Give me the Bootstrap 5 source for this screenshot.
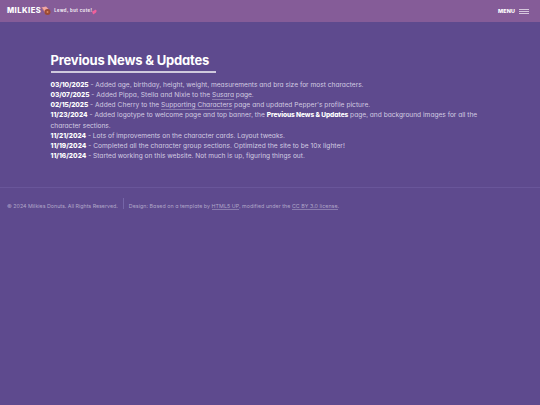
<!DOCTYPE html>
<html lang="en">
<head>
<meta charset="utf-8">
<meta name="viewport" content="width=device-width, initial-scale=1">
<title>Milkies Donuts</title>
<link href="https://cdn.jsdelivr.net/npm/bootstrap@5.3.0/dist/css/bootstrap.min.css" rel="stylesheet">
<style>
body{background:#5e4a8e;color:#d3cce2;font-family:Inter,"Liberation Sans",sans-serif;font-feature-settings:"cv11","ss03";font-size:6.6px;font-weight:400;line-height:10.13px}
.topbar{height:22px;background:#855c98;padding:0 11px 0 7px;color:#fff}
.brand{font-size:7.6px;font-weight:800;letter-spacing:.45px;padding-top:1px}
.donut{width:10px;height:10px}
.tagline{font-size:4.2px;font-weight:700;letter-spacing:.45px;margin-left:3px;padding-top:1px;color:#f3ecf5}
.heart{width:5px;height:6px;margin-top:1px}
.menu-label{font-size:5.4px;font-weight:800;letter-spacing:.15px}
.bars{width:10px;gap:1px}
.bars i{display:block;height:1px;background:#d6c7dd}
.news{padding:30px 50px 0 50.5px;height:165px}
.news h1{font-size:13px;font-weight:700;color:#fff;line-height:17px;width:165.5px;height:21px;border-bottom:2px solid #cfc9dd;margin-bottom:7px;letter-spacing:-.2px}
.news p{height:10.13px}
.news b{color:#fff;font-weight:800;letter-spacing:-.09px}
.news .date-plain{letter-spacing:0}
.track-1{letter-spacing:.01px}
.track-2{letter-spacing:.04px}
a{color:inherit;text-decoration:none;border-bottom:1px solid #8a7cae}
footer{border-top:1px solid #69569a;font-size:5.32px;color:#b0a6c8;padding:10px 7px}
.divide{border-left:1px solid #7565a8;height:11px;margin:0 5px}
.foot-text{padding-top:6px}
.credits{letter-spacing:.04px}
</style>
</head>
<body>
<header class="topbar d-flex align-items-center justify-content-between">
<div class="d-flex align-items-center"><span class="brand">MILKIES</span><svg class="donut" viewBox="0 0 20 20"><path d="M1 3l9-2 5 5-6 9z" fill="#f2a6a3"/><path d="M2 4l5 7" stroke="#b0605c" stroke-width="1.2"/><ellipse cx="13" cy="12" rx="6" ry="6" fill="#9b4a35"/><circle cx="13" cy="12" r="2" fill="#d98a61"/></svg><span class="tagline">Lewd, but cute!</span><svg class="heart" viewBox="0 0 10 12"><path d="M2 10C-1 5 1 2 4 4 5 0 10 1 9 5 8 8 5 9 2 11z" fill="#f0609b"/></svg></div>
<div class="d-flex align-items-center gap-1"><span class="menu-label">MENU</span><span class="bars d-flex flex-column"><i></i><i></i><i></i></span></div>
</header>
<main class="news">
<h1 class="text-nowrap">Previous News &amp; Updates</h1>
<p class="m-0 text-nowrap"><b>03/10/2025</b><span class="track-1"> - Added age, birthday, height, weight, measurements and bra size for most characters.</span></p>
<p class="m-0 text-nowrap"><b>03/07/2025</b><span class="track-2"> - Added Pippa, Stella and Nixie to the </span><a>Susara</a><span> page.</span></p>
<p class="m-0 text-nowrap"><b>02/15/2025</b><span class="track-2"> - Added Cherry to the </span><a>Supporting Characters</a><span class="track-2"> page and updated Pepper's profile picture.</span></p>
<p class="m-0 text-nowrap"><b class="date-plain">11/23/2024</b><span class="track-2"> - Added logotype to welcome page and top banner, the </span><b>Previous News &amp; Updates</b><span> page, and background images for all the</span></p>
<p class="m-0 text-nowrap">character sections.</p>
<p class="m-0 text-nowrap"><b class="date-plain">11/21/2024</b><span> - Lots of improvements on the character cards. Layout tweaks.</span></p>
<p class="m-0 text-nowrap"><b class="date-plain">11/19/2024</b><span class="track-2"> - Completed all the character group sections. Optimized the site to be 10x lighter!</span></p>
<p class="m-0 text-nowrap"><b class="date-plain">11/16/2024</b><span> - Started working on this website. Not much is up, figuring things out.</span></p>
</main>
<footer class="d-flex align-items-start text-nowrap"><span class="foot-text lh-1">© 2024 Milkies Donuts. All Rights Reserved.</span><span class="divide"></span><div class="foot-text credits lh-1">Design: Based on a template by <a>HTML5 UP</a>, modified under the <a>CC BY 3.0 license</a>.</div></footer>
<script src="https://cdn.jsdelivr.net/npm/bootstrap@5.3.0/dist/js/bootstrap.bundle.min.js"></script>
</body>
</html>
